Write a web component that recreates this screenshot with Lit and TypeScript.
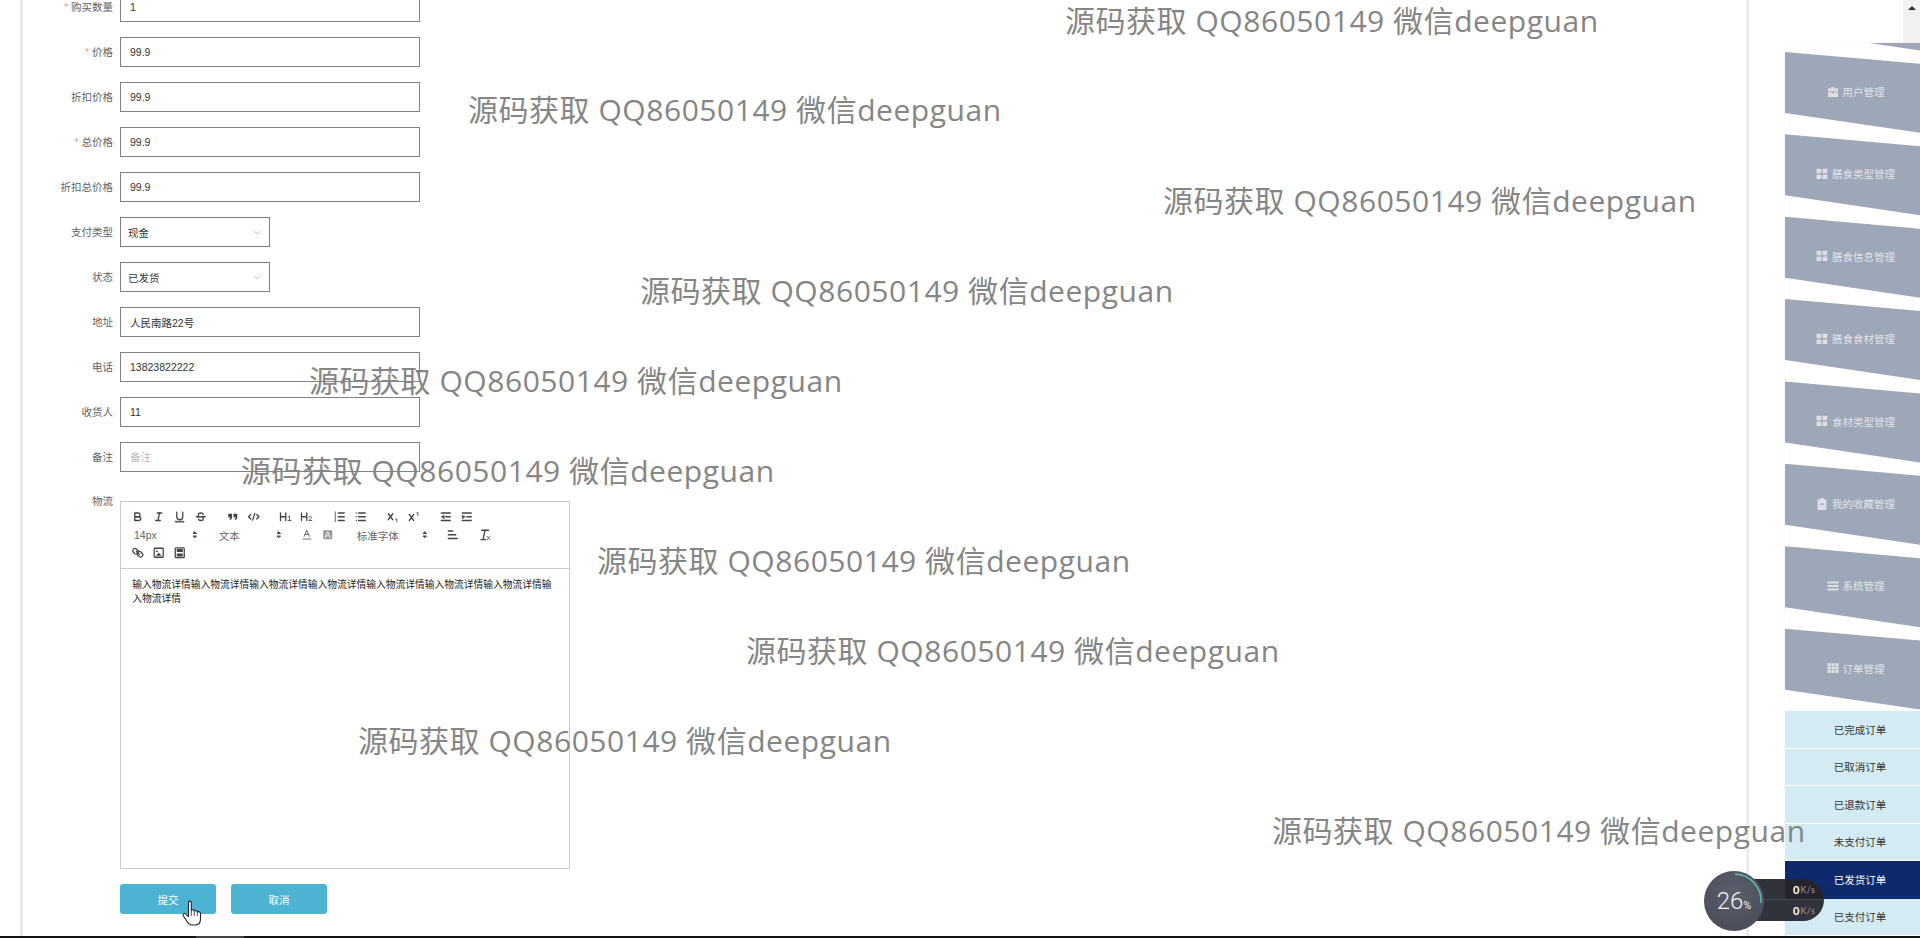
import { LitElement, html, css, svg } from "lit";
import { customElement } from "lit/decorators.js";

const ic = (body: unknown) => html`<svg class="qi" viewBox="0 0 18 18">${body}</svg>`;
const T: Record<string, unknown> = {
  bold: ic(svg`<path d="M5,4H9.5A2.5,2.5,0,0,1,12,6.5v0A2.5,2.5,0,0,1,9.5,9H5V4Z"/><path d="M5,9h5.5A2.5,2.5,0,0,1,13,11.5v0A2.5,2.5,0,0,1,10.5,14H5V9Z"/>`),
  italic: ic(svg`<line x1="7" x2="13" y1="4" y2="4"/><line x1="5" x2="11" y1="14" y2="14"/><line x1="8" x2="10" y1="14" y2="4"/>`),
  underline: ic(svg`<path d="M5,3V9a4,4,0,0,0,4,4h0a4,4,0,0,0,4-4V3"/><rect class="f" x="3" y="15" width="12" height="1.4" rx=".5"/>`),
  strike: ic(svg`<line x1="3" x2="15" y1="9" y2="9"/><path d="M12.5,6C12,4.7 10.6,4 9,4C7.2,4 5.7,5 5.7,6.5C5.7,7.5 6.2,8.3 7.2,9M5.8,12c.4,1.3 1.7,2 3.2,2c1.9,0 3.4-.9 3.4-2.5c0-.6-.2-1.1-.5-1.5"/>`),
  quote: ic(svg`<path class="f n" d="M3 5h5v5c0 2-1.2 3.2-3.2 3.5v-1.7C5.7 11.5 6 11 6 10H3ZM10 5h5v5c0 2-1.2 3.2-3.2 3.5v-1.7c.9-.3 1.2-.8 1.2-1.8h-3Z"/>`),
  code: ic(svg`<polyline points="5 6 2 9 5 12"/><polyline points="13 6 16 9 13 12"/><line x1="10.5" x2="7.5" y1="4.5" y2="13.5"/>`),
  h1: ic(svg`<path d="M2 4v10M9 4v10M2 9h7"/><path class="t" d="M12 9.5l2-1.3V14M12 14h4"/>`),
  h2: ic(svg`<path d="M2 4v10M9 4v10M2 9h7"/><path class="t" d="M11.7 9.5c.3-1 3.8-1.3 3.8.6c0 1.4-3.8 2.7-3.8 3.9h4"/>`),
  ol: ic(svg`<line x1="7" x2="15" y1="4" y2="4"/><line x1="7" x2="15" y1="9" y2="9"/><line x1="7" x2="15" y1="14" y2="14"/><line class="t" x1="3" x2="3" y1="2.5" y2="15.5"/>`),
  ul: ic(svg`<line x1="6" x2="15" y1="4" y2="4"/><line x1="6" x2="15" y1="9" y2="9"/><line x1="6" x2="15" y1="14" y2="14"/><line x1="3" x2="3" y1="4" y2="4"/><line x1="3" x2="3" y1="9" y2="9"/><line x1="3" x2="3" y1="14" y2="14"/>`),
  sub: ic(svg`<path d="M3 5l6 8M9 5l-6 8"/><path class="t" d="M13 12.5l1.5-.8V16"/>`),
  sup: ic(svg`<path d="M3 6l6 8M9 6l-6 8"/><path class="t" d="M13 4l1.5-.8V7.500"/>`),
  outdent: ic(svg`<line x1="3" x2="15" y1="14" y2="14"/><line x1="3" x2="15" y1="4" y2="4"/><line x1="9" x2="15" y1="9" y2="9"/><polygon class="f" points="3 9 7 6.500 7 11.500"/>`),
  indent: ic(svg`<line x1="3" x2="15" y1="14" y2="14"/><line x1="3" x2="15" y1="4" y2="4"/><line x1="9" x2="15" y1="9" y2="9"/><polygon class="f" points="7 9 3 6.500 3 11.500"/>`),
  color: ic(svg`<path class="t" d="M5.500 11L9 3l3.500 8M6.800 8.500h4.400"/><rect class="f n" style="fill:#888" x="3" y="14" width="12" height="1.500"/>`),
  bg: ic(svg`<rect class="f n" style="fill:#999" x="3" y="3" width="12" height="12"/><path class="t" style="stroke:#fff" d="M5.500 13L9 5l3.500 8M6.800 10.500h4.400"/>`),
  align: ic(svg`<line x1="3" x2="13" y1="9" y2="9"/><line x1="3" x2="9" y1="4" y2="4"/><line x1="3" x2="15" y1="14" y2="14"/>`),
  clean: ic(svg`<line x1="5" x2="14" y1="3" y2="3"/><line x1="9.500" x2="7" y1="3" y2="14"/><line x1="4" x2="10" y1="15.500" y2="15.500"/><path class="t" d="M12 11l4 4.500M16 11l-4 4.500"/>`),
  link: ic(svg`<rect x="2" y="4" width="8" height="6" rx="3" transform="rotate(45 6 7)"/><rect x="8" y="8" width="8" height="6" rx="3" transform="rotate(45 12 11)"/><line x1="7" y1="7" x2="11" y2="11"/>`),
  image: ic(svg`<rect x="3" y="3" width="12" height="12" rx="1"/><circle class="f n" cx="6.500" cy="7" r="1.200"/><polyline class="f n" points="5 13 9 9 13 13"/>`),
  video: ic(svg`<rect x="3" y="2.500" width="12" height="13" rx="1"/><rect class="f n" x="5" y="4" width="8" height="4"/><rect class="f n" x="5" y="10" width="8" height="4"/>`),
};

const arrows = html`<svg class="qi arrows" viewBox="0 0 18 18"><polygon points="7 11 9 13 11 11"/><polygon points="7 7 9 5 11 7"/></svg>`;

const SI: Record<string, unknown> = {
  case: html`<svg class="si" viewBox="0 0 12 12"><path d="M4.300 2.200V1h3.400v1.200H11v3.300H1V2.200ZM5.200 2.200h1.600v-.5H5.200ZM1 6.300h4v1h2v-1h4V11H1Z"/></svg>`,
  grid: html`<svg class="si" viewBox="0 0 12 12"><rect x=".5" y=".8" width="4.800" height="4.500" rx=".4"/><rect x="6.500" y=".8" width="4.800" height="4.500" rx=".4"/><rect x=".5" y="6.500" width="4.800" height="4.500" rx=".4"/><rect x="6.500" y="6.500" width="4.800" height="4.500" rx=".4"/></svg>`,
  clip: html`<svg class="si" viewBox="0 0 12 12"><path d="M1.500 1.500H4V.3h4v1.200h2.500V12h-9ZM4 5.500v1.300h4V5.500Z"/></svg>`,
  bars: html`<svg class="si" viewBox="0 0 12 12"><rect x=".5" y="1.500" width="11" height="2"/><rect x=".5" y="5" width="11" height="2"/><rect x=".5" y="8.500" width="11" height="2"/></svg>`,
  th: html`<svg class="si" viewBox="0 0 12 12"><path d="M.5 1.200h3.300v2.900H.5ZM4.400 1.200h3.300v2.900H4.400ZM8.300 1.200h3.300v2.900H8.300ZM.5 4.600h3.300v2.900H.5ZM4.400 4.600h3.300v2.900H4.400ZM8.300 4.600h3.300v2.900H8.300ZM.5 8h3.300v2.900H.5ZM4.400 8h3.300v2.900H4.400ZM8.300 8h3.300v2.900H8.300Z"/></svg>`,
};

const MARKS = [
  [1065, 21], [468, 110], [1163, 201], [640, 291], [309, 381],
  [241, 471], [597, 561], [746, 651], [358, 741], [1272, 831],
];

const FIELDS = [
  { label: "购买数量", req: true, value: "1" },
  { label: "价格", req: true, value: "99.9" },
  { label: "折扣价格", value: "99.9" },
  { label: "总价格", req: true, value: "99.9" },
  { label: "折扣总价格", value: "99.9" },
  { label: "支付类型", value: "现金", select: true },
  { label: "状态", value: "已发货", select: true },
  { label: "地址", value: "人民南路22号" },
  { label: "电话", value: "13823822222" },
  { label: "收货人", value: "11" },
  { label: "备注", value: "", placeholder: "备注" },
];

const MENU = [
  ["case", "用户管理"], ["grid", "膳食类型管理"], ["grid", "膳食信息管理"], ["grid", "膳食食材管理"],
  ["grid", "食材类型管理"], ["clip", "我的收藏管理"], ["bars", "系统管理"], ["th", "订单管理"],
];
const SUB = ["已完成订单", "已取消订单", "已退款订单", "未支付订单", "已发货订单", "已支付订单"];

@customElement("app-root")
export class AppRoot extends LitElement {
  static styles = css`
    :host { display: block; position: relative; width: 1920px; height: 938px; overflow: hidden; background: #fff;
      font-family: "Liberation Sans", "Noto Sans CJK SC", sans-serif; font-size: 10.5px; color: #333; }
    .main { display: flex; height: 936px; overflow: hidden; padding-left: 20px; }
    .bar { height: 2px; background: #151515; display: flex; padding-left: 196px; }
    .bar i { display: block; width: 48px; background: #444; }
    .card { width: 1729px; flex: none; box-sizing: border-box; border-left: 3px solid #ececec; border-right: 3px solid #ececec; }
    .form { margin-top: -8px; }
    .row { display: flex; gap: 7px; margin-bottom: 15px; align-items: center; }
    .row.top { align-items: flex-start; margin: 22px 0 15px; }
    .lab { width: 90px; text-align: right; color: #606266; line-height: 15px; flex: none; }
    .lab b { font-weight: 400; color: #e99; margin-right: 3px; }
    input { box-sizing: border-box; width: 300px; height: 30px; border: 1px solid #808080; padding: 0 9px; font: inherit; color: #333; outline: none; background: transparent; }
    input::placeholder { color: #bbb; }
    .sel { box-sizing: border-box; width: 150px; height: 30px; border: 1px solid #808080; padding: 0 8px 0 7px; display: flex; align-items: center; justify-content: space-between; color: #333; }
    .chev { width: 8px; height: 5px; fill: none; stroke: #c0c4cc; stroke-width: 1; }
    .editor { box-sizing: border-box; width: 450px; height: 368px; margin-top: 7px; border: 1px solid #ccc; }
    .tools { box-sizing: border-box; height: 67px; border-bottom: 1px solid #ccc; padding: 6px; display: flex; flex-wrap: wrap; align-content: flex-start; }
    .grp { display: flex; margin-right: 11.25px; height: 18px; }
    .btn { width: 21px; height: 18px; display: flex; align-items: center; justify-content: center; }
    .qi { width: 13.5px; height: 13.5px; fill: none; stroke: #444; stroke-width: 1.700; stroke-linecap: round; stroke-linejoin: round; }
    .qi .f { fill: #444; stroke-width: .5; }
    .qi .n { stroke: none; }
    .qi .t { stroke-width: 1.100; }
    .arrows { stroke-width: 1.300; }
    .arrows polygon { fill: #444; }
    .pick { box-sizing: border-box; height: 18px; padding: 0 0 0 7px; display: flex; align-items: center; justify-content: space-between; color: #666; }
    .pick .arrows { flex: none; margin-right: -.5px; }
    .w1 { width: 73.500px; } .w2 { width: 81px; }
    .body { padding: 9px 11.250px; font-size: 9.750px; line-height: 14.400px; color: #222; }
    .btns { display: flex; gap: 15px; margin-left: 97px; }
    .pri { width: 96px; height: 30px; background: #4cb4d2; color: #fff; border-radius: 3px; display: flex; align-items: center; justify-content: center; }
    .side { width: 150px; flex: none; margin: 43px 0 0 36px; overflow: hidden; box-shadow: 0 0 3px #eef1f5; }
    .sb { position: absolute; right: 0; top: 0; width: 17px; height: 43px; background: #f1f1f1; }
    .sb i { display: block; margin: 6px auto 0; width: 0; height: 0; border: 4px solid transparent; border-bottom: 4px solid #333; border-top: 0; }
    .mi { box-sizing: border-box; height: 82.400px; padding: 0 9px 3px 0; background: #9da7b8; color: #e0e3e9; display: flex; align-items: center; justify-content: center; gap: 4px;
      clip-path: polygon(0 0, 100% 13.300px, 100% 83.200px, 0 61px); }
    .mi.hid { margin-top: -73.500px; }
    .si { width: 12px; height: 12px; fill: #dcdfe5; flex: none; }
    .sub { box-sizing: border-box; height: 37.500px; background: #d5ebf3; border-bottom: 1px solid #fff; display: flex; align-items: center; justify-content: center; color: #333; }
    .sub.on { background: #0e2a6c; color: #fff; border-bottom-color: #0e2a6c; }
    .mark { position: absolute; transform: translateY(-50%); font: 400 30px/40px "Open Sans", "Noto Sans CJK SC", sans-serif; letter-spacing: .54px; color: #858585; white-space: nowrap; }
    .cursor { position: absolute; left: 182px; top: 900px; width: 20px; height: 26px; }
    .net { position: absolute; left: 1704px; top: 871px; width: 120px; height: 60px; }
    .pill { position: absolute; left: 40px; right: 0; top: 8px; height: 42px; border-radius: 0 21px 21px 0; background: #30323c; overflow: hidden; }
    .pill div { height: 21px; display: flex; align-items: center; box-sizing: border-box; padding-left: 49px; color: #fff; font: 700 11px Lato, sans-serif; }
    .pill div span { color: #9a9ca6; font-size: 9px; font-weight: 400; margin-left: 1px; letter-spacing: .5px; }
    .pill .up { background: linear-gradient(90deg, #30323c 41px, #24252c 41px); border-bottom: 1px solid #454752; }
    .ar { position: absolute; left: 21px; width: 9px; height: 9px; top: 14px; }
    .ar.dn { top: 35px; }
    .ring { position: absolute; left: 0; top: 0; width: 60px; height: 60px; border-radius: 50%; background: radial-gradient(circle at 50% 35%, #5b5e6c, #474955); display: flex; align-items: center; justify-content: center; color: #f3f3f5; font: 300 24px Roboto, sans-serif; }
    .ring small { font-size: 11px; margin-top: 8px; font-weight: 400; }
    .ring svg { position: absolute; inset: 0; fill: none; stroke: #5dbcac; stroke-width: 1.600; }
  `;

  field(f: (typeof FIELDS)[number]) {
    return html`<div class="row">
      <div class="lab">${f.req ? html`<b>*</b>` : ""}${f.label}</div>
      ${f.select
        ? html`<div class="sel"><span>${f.value}</span><svg class="chev" viewBox="0 0 8 5"><polyline points="1 1 4 4 7 1"/></svg></div>`
        : html`<input .value=${f.value} placeholder=${f.placeholder ?? ""} />`}
    </div>`;
  }

  render() {
    const grp = (names: string[]) => html`<div class="grp">${names.map((n) => html`<div class="btn">${T[n]}</div>`)}</div>`;
    const pick = (t: string, c: string) => html`<div class="grp"><div class="pick ${c}"><span>${t}</span>${arrows}</div></div>`;
    return html`
      <div class="main">
        <div class="card">
          <div class="form">
            ${FIELDS.map((f) => this.field(f))}
            <div class="row top">
              <div class="lab">物流</div>
              <div class="editor">
                <div class="tools">
                  ${grp(["bold", "italic", "underline", "strike"])}
                  ${grp(["quote", "code"])}
                  ${grp(["h1", "h2"])}
                  ${grp(["ol", "ul"])}
                  ${grp(["sub", "sup"])}
                  ${grp(["outdent", "indent"])}
                  ${pick("14px", "w1")}
                  ${pick("文本", "w1")}
                  ${grp(["color", "bg"])}
                  ${pick("标准字体", "w2")}
                  ${grp(["align"])}
                  ${grp(["clean"])}
                  ${grp(["link", "image", "video"])}
                </div>
                <div class="body">${"输入物流详情".repeat(8)}</div>
              </div>
            </div>
            <div class="btns"><div class="pri">提交</div><div class="pri">取消</div></div>
          </div>
        </div>
        <div class="side">
          <div class="mi hid"></div>
          ${MENU.map(([i, t]) => html`<div class="mi">${SI[i]}<span>${t}</span></div>`)}
          ${SUB.map((s, i) => html`<div class="sub ${i === 4 ? "on" : ""}">${s}</div>`)}
        </div>
      </div>
      <div class="bar"><i></i></div>
      <div class="sb"><i></i></div>
      ${MARKS.map(([x, y]) => html`<div class="mark" style="left:${x}px;top:${y}px">源码获取 QQ86050149 微信deepguan</div>`)}
      <svg class="cursor" viewBox="0 0 20 26"><path fill="#fff" stroke="#1c2233" stroke-width="1.100" stroke-linejoin="round" d="M6.500 2.300C6.500.7 9.300.7 9.300 2.300V10.500C10 9.300 12 9.500 12.300 11C13 9.900 15 10.200 15.300 12C16 11.300 18.300 11.500 18.500 13.500V18.500C18.500 22 16.800 25 13.500 25H10C7.500 25 6.300 23.500 5 21.500L1.300 15.800C.4 14.200 2 12.800 3.500 13.900L6.500 16.500Z"/><path fill="none" stroke="#1c2233" stroke-width=".8" d="M9.300 11v5M12.300 11v5M15.300 12v4"/></svg>
      <div class="net">
        <div class="pill">
          <div class="up">0<span>K/s</span></div>
          <div>0<span>K/s</span></div>
        </div>
        <svg class="ar" viewBox="0 0 9 9"><path fill="#5a9fd0" d="M4.500 0L9 4.500H6V9H3V4.500H0Z"/></svg>
        <svg class="ar dn" viewBox="0 0 9 9"><path fill="#45a348" d="M4.500 9L0 4.500H3V0H6V4.500H9Z"/></svg>
        <div class="ring">26<small>%</small><svg viewBox="0 0 60 60"><path d="M31 3A27 27 0 0 1 57 32"/></svg></div>
      </div>
    `;
  }
}
